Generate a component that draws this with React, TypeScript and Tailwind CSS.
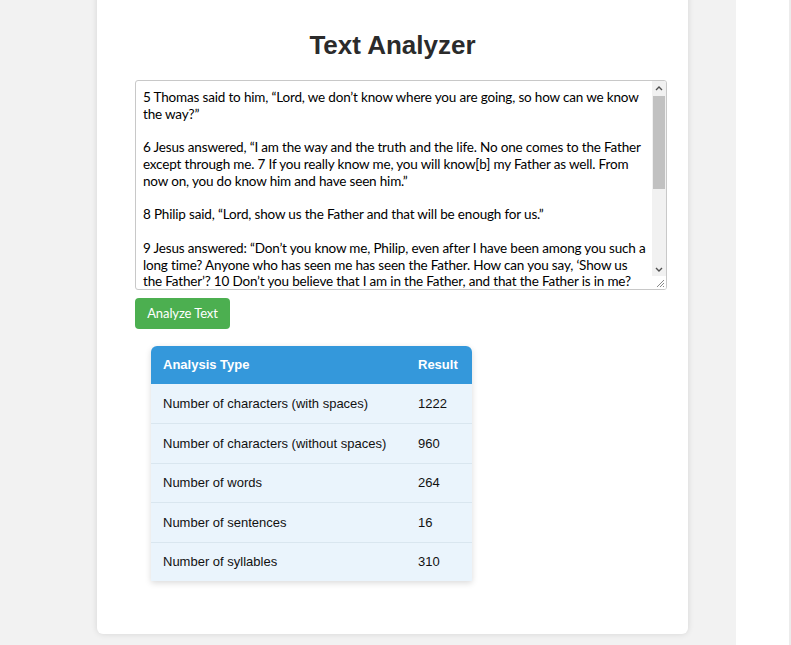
import React from 'react';

const lines = [
  '5 Thomas said to him, “Lord, we don’t know where you are going, so how can we know',
  'the way?”',
  '',
  '6 Jesus answered, “I am the way and the truth and the life. No one comes to the Father',
  'except through me. 7 If you really know me, you will know[b] my Father as well. From',
  'now on, you do know him and have seen him.”',
  '',
  '8 Philip said, “Lord, show us the Father and that will be enough for us.”',
  '',
  '9 Jesus answered: “Don’t you know me, Philip, even after I have been among you such a',
  'long time? Anyone who has seen me has seen the Father. How can you say, ‘Show us',
  'the Father’? 10 Don’t you believe that I am in the Father, and that the Father is in me?',
];

const rows: [string, string][] = [
  ['Number of characters (with spaces)', '1222'],
  ['Number of characters (without spaces)', '960'],
  ['Number of words', '264'],
  ['Number of sentences', '16'],
  ['Number of syllables', '310'],
];

export default function App() {
  return (
    <div className="flex h-[645px] w-[791px] overflow-hidden bg-[#f2f2f2] font-['Liberation_Sans',Arial,sans-serif]">
      {/* main area */}
      <div className="w-[736px] shrink-0 pl-[97px]">
        <div className="-mt-3 h-[646px] w-[591px] rounded-md bg-white pt-[37px] shadow-[0_0_6px_rgba(0,0,0,0.12)]">
          <h1 className="text-center text-[26px] font-bold leading-[40px] text-[#2b2b2b]">Text Analyzer</h1>

          <div className="ml-[38px] mt-[15px] flex h-[210px] w-[532px] overflow-hidden rounded-[3px] border border-[#c8c8c8] bg-white">
            <div className="flex-1 overflow-hidden pl-[7px] pt-[8px] font-['Lato','Noto_Sans',sans-serif] text-[13.5px] leading-[16.75px] tracking-[-0.17px] text-black">
              {lines.map((l, i) => (
                <div key={i} className="h-[16.75px] whitespace-pre">
                  {l}
                </div>
              ))}
            </div>
            {/* scrollbar */}
            <div className="relative flex w-[14px] shrink-0 flex-col bg-[#f1f1f1]">
              <div className="flex h-[15px] items-center justify-center">
                <svg width="8" height="5" viewBox="0 0 8 5">
                  <path d="M1 4 L4 1 L7 4" fill="none" stroke="#505050" strokeWidth="1.4" />
                </svg>
              </div>
              <div className="mx-[1px] h-[93px] bg-[#c1c1c1]" />
              <div className="flex-1" />
              <div className="flex h-[14px] items-center justify-center">
                <svg width="8" height="5" viewBox="0 0 8 5">
                  <path d="M1 1 L4 4 L7 1" fill="none" stroke="#505050" strokeWidth="1.4" />
                </svg>
              </div>
              <div className="flex h-[13px] items-end justify-end bg-white pb-[1px] pr-[1px]">
                <svg width="10" height="10" viewBox="0 0 10 10">
                  <path d="M9 2 L2 9 M9 5 L5 9 M9 8 L8 9" stroke="#8a8a8a" strokeWidth="1" />
                </svg>
              </div>
            </div>
          </div>

          <button className="ml-[38px] mt-[8px] h-[31px] w-[95px] rounded-[4px] bg-[#4caf50] font-['Lato','Noto_Sans',sans-serif] text-[13px] tracking-[-0.1px] text-white">
            Analyze Text
          </button>

          <div className="ml-[54px] mt-[17px] w-[321px] overflow-hidden rounded-t-[6px] shadow-[0_2px_6px_rgba(0,0,0,0.15)]">
            <div className="flex h-[38px] items-center bg-[#3498db] text-[13px] font-bold text-white">
              <div className="w-[255px] pl-[12px]">Analysis Type</div>
              <div className="pl-[12px]">Result</div>
            </div>
            {rows.map(([k, v], i) => (
              <div
                key={k}
                className={`flex h-[39.4px] items-center bg-[#eaf4fc] text-[13px] text-[#111] ${i > 0 ? 'border-t border-[#d9e6ef]' : ''}`}
              >
                <div className="w-[255px] pl-[12px]">{k}</div>
                <div className="pl-[12px]">{v}</div>
              </div>
            ))}
          </div>
        </div>
      </div>

      {/* right strip */}
      <div className="flex-1 border-r-2 border-[#ececec] bg-white" />
    </div>
  );
}
